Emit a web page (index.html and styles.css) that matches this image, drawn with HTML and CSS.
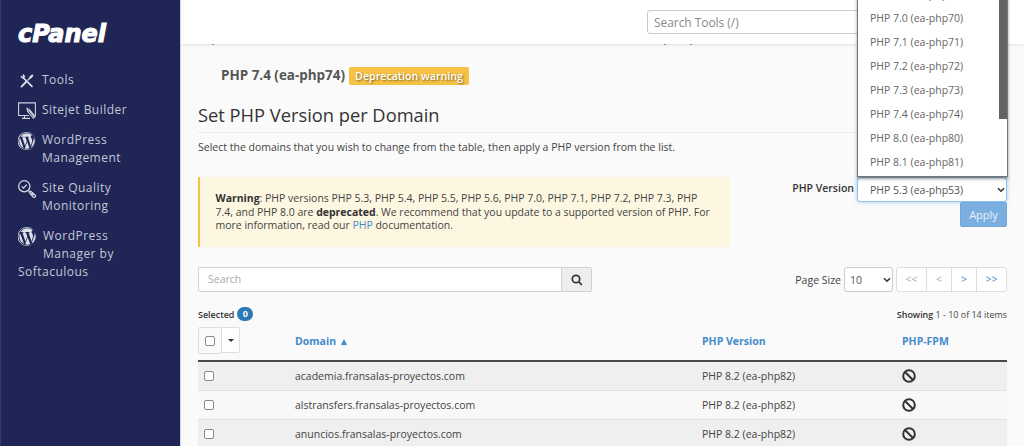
FILE: index.html
```html
<!DOCTYPE html>
<html lang="en">
<head>
<meta charset="utf-8">
<title>cPanel - MultiPHP Manager</title>
<link rel="stylesheet" href="styles.css">
</head>
<body>
<svg class="defs" aria-hidden="true">
  <symbol id="wp" viewBox="0 0 122.5 122.5">
    <path d="M8.7 61.3c0 20.8 12.1 38.7 29.6 47.3L13.3 39.9c-2.9 6.5-4.6 13.7-4.6 21.4zm88-2.7c0-6.5-2.3-11-4.3-14.5-2.7-4.3-5.2-8-5.2-12.3 0-4.8 3.7-9.3 8.9-9.3h.7A52.4 52.4 0 0 0 61.3 8.700C42.900 8.700 26.800 18.100 17.400 32.400c1.200 0 2.400.1 3.400.1 5.500 0 14-.7 14-.7 2.800-.2 3.200 4 .3 4.300 0 0-2.800.3-6 .5l19.100 56.900 11.500-34.500-8.200-22.400c-2.800-.2-5.500-.5-5.500-.5-2.800-.2-2.500-4.500.3-4.300 0 0 8.700.7 13.900.7 5.500 0 14-.7 14-.7 2.800-.2 3.200 4 .3 4.300 0 0-2.800.3-6 .5l19 56.500 5.200-17.500c2.300-7.300 4-12.500 4-17zM62.200 65.900l-15.800 45.800a52.600 52.600 0 0 0 32.400-.8l-.4-.7zm45.200-29.800c.2 1.700.4 3.500.4 5.400 0 5.300-1 11.300-4 18.800l-16.100 46.400a52.500 52.500 0 0 0 19.700-70.600zM61.300 0a61.300 61.300 0 1 0 0 122.500A61.300 61.300 0 0 0 61.300 0zm0 119.700a58.400 58.400 0 1 1 0-116.900 58.400 58.400 0 0 1 0 116.900z"/>
  </symbol>
  <symbol id="ban" viewBox="0 0 14 14">
    <circle cx="7" cy="7" r="5.800" fill="none" stroke="#333" stroke-width="2"/>
    <path d="M3 3l8 8" stroke="#333" stroke-width="2"/>
  </symbol>
</svg>
<div class="app">
  <aside class="sidebar">
    <svg class="logo" viewBox="0 0 90 26"><text x="0" y="22.500" textLength="88" lengthAdjust="spacingAndGlyphs">cPanel</text></svg>
    <nav class="nav">
      <a class="nav-item"><svg class="nav-icon" viewBox="0 0 18 18"><g fill="none" stroke="#dfe1e9" stroke-linecap="round"><path d="M5.500 6L14 14.300" stroke-width="1.700"/><path d="M3.300 4.700L4.800 5.800 6.300 4.500 5.300 3" stroke-width="1.500"/><path d="M3.500 14.600L8 10" stroke-width="1.800"/><path d="M10 8L14 4" stroke-width="1.200"/><path d="M12.300 5.500L14.200 3.600" stroke-width="2.100"/></g></svg><span>Tools</span></a>
      <a class="nav-item"><svg class="nav-icon" viewBox="0 0 18 18"><g fill="none" stroke="#cfd2df" stroke-width="1.100"><path d="M11 13.500H.6V.9h16.800v12.600h-1M6.500 13.500v2.700M4 16.400h8"/><path d="M9 6.300l.7 3.200 5.700 6.800 1.700-1.500-5.500-7.200zM10 9.300l2-1.500M11.500 9l4.500 5.600"/></g></svg><span>Sitejet Builder</span></a>
      <a class="nav-item"><svg class="nav-icon"><use href="#wp"/></svg><span>WordPress<br>Management</span></a>
      <a class="nav-item"><svg class="nav-icon" viewBox="0 0 18 18"><g fill="none" stroke="#dfe1e9" stroke-width="1.200"><circle cx="6.300" cy="6.300" r="5.600"/><path d="M3.800 6.300l1.700 1.800 3.300-3.500M10.300 10.400l1.400 1.400"/><path d="M11.500 12.700l1.300-1.300 4.300 3.600c1 1.500-.5 3-2 2z"/><path d="M13.500 13.300l2 1.900"/></g></svg><span>Site Quality<br>Monitoring</span></a>
      <a class="nav-item nav-item-wrap"><svg class="nav-icon nav-icon-lg"><use href="#wp"/></svg><span>WordPress<br>Manager by</span><span class="nav-rest">Softaculous</span></a>
    </nav>
  </aside>
  <main class="main">
    <header class="topbar"><div class="tool-search">Search Tools (/)</div></header>
    <i class="tail tail-a"></i><i class="tail tail-b"></i><i class="tail tail-c"></i>
    <section class="content">
      <div class="php-line"><strong>PHP 7.4 (ea-php74)</strong><span class="label-warning">Deprecation warning</span></div>
      <h3 class="title"><span>Set PHP Version per Domain</span></h3>
      <p class="intro"><span>Select the domains that you wish to change from the table, then apply a PHP version from the list.</span></p>
      <div class="apply-row">
        <div class="callout"><b>Warning</b>: PHP versions PHP 5.3, PHP 5.4, PHP 5.5, PHP 5.6, PHP 7.0, PHP 7.1, PHP 7.2, PHP 7.3, PHP<br>7.4, and PHP 8.0 are <b>deprecated</b>. We recommend that you update to a supported version of PHP. For<br>more information, read our <a>PHP</a> documentation.</div>
        <div class="apply-form">
          <div class="version"><label>PHP Version</label>
            <div class="select select-focus"><span>PHP 5.3 (ea-php53)</span><svg class="chev" viewBox="0 0 8 6"><path d="M1 1.200l3 3 3-3"/></svg></div></div>
          <button class="apply">Apply</button>
        </div>
      </div>
      <div class="toolbar">
        <div class="search"><div class="search-input">Search</div><div class="search-btn"><svg viewBox="0 0 12 12"><circle cx="5" cy="5" r="3.700"/><path d="M7.800 7.800l3 3"/></svg></div></div>
        <div class="paging"><span class="size-label">Page Size</span><div class="select size"><span>10</span><svg class="chev" viewBox="0 0 8 6"><path d="M1 1.200l3 3 3-3"/></svg></div>
          <div class="pager"><span class="off">&lt;&lt;</span><span class="off">&lt;</span><span>&gt;</span><span>&gt;&gt;</span></div></div>
      </div>
      <div class="status"><div class="selected"><b>Selected</b><span class="badge">0</span></div><div class="showing"><b>Showing</b> 1 - 10 of 14 items</div></div>
      <div class="table">
        <div class="row head"><div class="check-group"><div class="check-all"><i class="box"></i></div><div class="check-menu"><i class="caret"></i></div></div><span>Domain <i class="sort"></i></span><span>PHP Version</span><span>PHP-FPM</span></div>
        <div class="row"><i class="box"></i><span>academia.fransalas-proyectos.com</span><span>PHP 8.2 (ea-php82)</span><svg class="ban"><use href="#ban"/></svg></div>
        <div class="row"><i class="box"></i><span>alstransfers.fransalas-proyectos.com</span><span>PHP 8.2 (ea-php82)</span><svg class="ban"><use href="#ban"/></svg></div>
        <div class="row"><i class="box"></i><span>anuncios.fransalas-proyectos.com</span><span>PHP 8.2 (ea-php82)</span><svg class="ban"><use href="#ban"/></svg></div>
      </div>
    </section>
    <div class="menu">
      <div>PHP 5.6 (ea-php56)</div><div>PHP 7.0 (ea-php70)</div><div>PHP 7.1 (ea-php71)</div><div>PHP 7.2 (ea-php72)</div><div>PHP 7.3 (ea-php73)</div><div>PHP 7.4 (ea-php74)</div><div>PHP 8.0 (ea-php80)</div><div>PHP 8.1 (ea-php81)</div>
      <i class="thumb"></i>
    </div>
  </main>
</div>
</body>
</html>
```
FILE: styles.css
```css
* { box-sizing: border-box; }
body { margin: 0; font-family: "Open Sans", sans-serif; font-size: 10.500px; color: #444; background: #fafafa; }
.defs { position: absolute; width: 0; height: 0; }
.app { display: flex; width: 1024px; height: 446px; overflow: hidden; }

.sidebar { width: 180px; flex: none; background: #1f2555; padding: 19px 0 0 17px; border-left: 1px solid #343a68; }
.logo { display: block; width: 90px; height: 26px; overflow: visible; }
.logo text { font: italic 700 24.500px "DejaVu Sans", sans-serif; fill: #fff; stroke: #fff; stroke-width: 1.100px; }
.nav { display: flex; flex-direction: column; gap: 12px; padding-top: 26px; }
.nav-item { display: flex; gap: 6px; font-size: 12px; line-height: 18px; letter-spacing: .48px; color: #c5c8d8; }
.nav-icon { width: 18px; height: 18px; flex: none; margin: 1px 0 -1px; fill: #dfe1e9; }
.nav-item-wrap { flex-wrap: wrap; gap: 0 6px; }
.nav-icon-lg { width: 19px; height: 19px; margin-top: 0; }
.nav-rest { width: 100%; }

.main { position: relative; flex: 1; min-width: 0; overflow: hidden; border-left: 1px solid #d5d3e2; }
.topbar { height: 44px; background: #fff; padding: 10px 0 0 466px; box-shadow: 0 1px 3px rgba(0,0,0,.1); }
.tool-search { width: 300px; height: 24px; border: 1px solid #c9c9d6; border-radius: 3px; padding-left: 6px; font-size: 11.900px; line-height: 22px; color: #888; }
.tail { position: absolute; top: 44px; width: 2px; height: 1px; background: #888; }
.tail-a { left: 31px; } .tail-b { left: 483px; } .tail-c { left: 509px; }

.content { padding: 23px 17px 0 17px; }
.php-line { display: flex; align-items: center; gap: 4px; height: 18px; padding-left: 23px; font-size: 13.450px; color: #555; }
.php-line strong { font-weight: 700; line-height: 16px; margin-top: -2px; }
.label-warning { width: 120px; height: 18px; line-height: 18px; text-align: center; border-radius: 2px; background: #f6c244; color: #fff; font-size: 10.600px; font-weight: 600; text-shadow: 1px 1px 2px rgba(0,0,0,.5); letter-spacing: .03px; white-space: nowrap; }
.title { margin: 18px 0 0; height: 30px; border-bottom: 1px solid #eaeaea; font-weight: 400; font-size: 18.300px; line-height: 24px; color: #333; }
.intro { margin: 6px 0 0; line-height: 16px; height: 16px; }
.apply-row { display: flex; justify-content: space-between; margin-top: 22px; height: 70px; }
.callout { width: 532px; height: 70px; padding: 15px 0 0 15.500px; border-left: 2px solid #f6c244; background: #fdf7e1; line-height: 13.600px; white-space: nowrap; letter-spacing: -.015px; }
.callout b { color: #333; }
.callout a { color: #428bca; }
.apply-form { display: flex; flex-direction: column; align-items: flex-end; }
.version { display: flex; gap: 3px; height: 25px; }
.version label { font-weight: 600; line-height: 22px; color: #333; }
.select { display: flex; align-items: center; justify-content: space-between; background: #fff; border: 1px solid #ccc; border-radius: 3px; color: #555; }
.select-focus { width: 150px; height: 25px; padding: 1px 1px 0 12px; border-color: #8dc3ee; box-shadow: 0 0 4px rgba(102,175,233,.6); }
.chev { width: 8px; height: 6px; fill: none; stroke: #333; stroke-width: 1.600; }
.apply { width: 47px; height: 25px; border: 1px solid #70a7d8; border-radius: 2px; padding: 0; background: #7bafdf; color: #e8f2fb; font: 11px "Open Sans", sans-serif; }

.toolbar { display: flex; justify-content: space-between; margin-top: 20px; height: 25px; }
.search { display: flex; width: 394px; border: 1px solid #d2d2d2; border-radius: 2px; background: #fff; }
.search-input { flex: 1; padding-left: 9px; line-height: 23px; color: #aaa; }
.search-btn { width: 30px; display: grid; place-items: center; background: #eee; border-left: 1px solid #d2d2d2; }
.search-btn svg { width: 12px; height: 12px; fill: none; stroke: #333; stroke-width: 1.700; }
.paging { display: flex; align-items: center; gap: 3px; }
.size { width: 49px; height: 25px; padding: 0 1px 0 5px; }
.pager { display: flex; height: 25px; border: 1px solid #ddd; border-radius: 3px; background: #fff; line-height: 23px; text-align: center; color: #428bca; }
.pager span { width: 25px; border-left: 1px solid #ddd; }
.pager span:first-child { width: 29px; border-left: 0; }
.pager span:last-child { width: 30px; }
.pager .off { color: #aaa; }

.status { display: flex; justify-content: space-between; align-items: center; height: 14px; margin: 15px 0 -1px; font-size: 8.950px; }
.status b { font-weight: 600; color: #333; }
.selected { display: flex; align-items: center; gap: 3px; }
.badge { width: 16px; height: 14px; border-radius: 7px; background: #2a7ab5; color: #fff; font-weight: 700; text-align: center; line-height: 14px; }

.row { display: grid; grid-template-columns: 97px 407px 200px 1fr; align-items: center; height: 29.300px; background: #f8f8f8; border-top: 1px solid #e0e0e0; }
.row:nth-child(even) { background: #efefef; }
.row:nth-child(2) { border-top: 0; height: 28px; }
.row.head { height: 42px; background: none; border-top: 0; border-bottom: 2px solid #4a4a4a; font-weight: 700; color: #428bca; }
.head > span { margin-top: 1px; }
.check-group { display: flex; align-self: start; margin-top: 7px; }
.check-all { width: 24px; height: 27px; display: grid; place-items: center; border: 1px solid #ddd; border-radius: 2px; background: #fafafa; }
.check-menu { width: 19px; height: 26px; margin-left: -1px; display: grid; place-items: center; border: 1px solid #ddd; border-radius: 2px; background: #fff; }
.caret { border: 3px solid transparent; border-top-color: #333; border-bottom: 0; }
.sort { display: inline-block; margin-left: 2px; border: 3px solid transparent; border-bottom: 6px solid #428bca; border-top: 0; }
.box { width: 10px; height: 10px; border: 1px solid #8a8a8a; border-radius: 2px; background: #fff; }
.row > .box { margin-left: 6px; }
.ban { width: 14px; height: 14px; }

.menu { position: absolute; top: -18px; left: 676px; width: 151px; height: 195px; background: #fff; border: 1px solid #777; border-top: 0; box-shadow: 0 2px 3px rgba(0,0,0,.4); color: #666; }
.menu div { height: 24px; line-height: 24px; padding-left: 12px; }
.thumb { position: absolute; right: 0; top: 0; width: 8px; height: 137px; background: #636363; }
```
